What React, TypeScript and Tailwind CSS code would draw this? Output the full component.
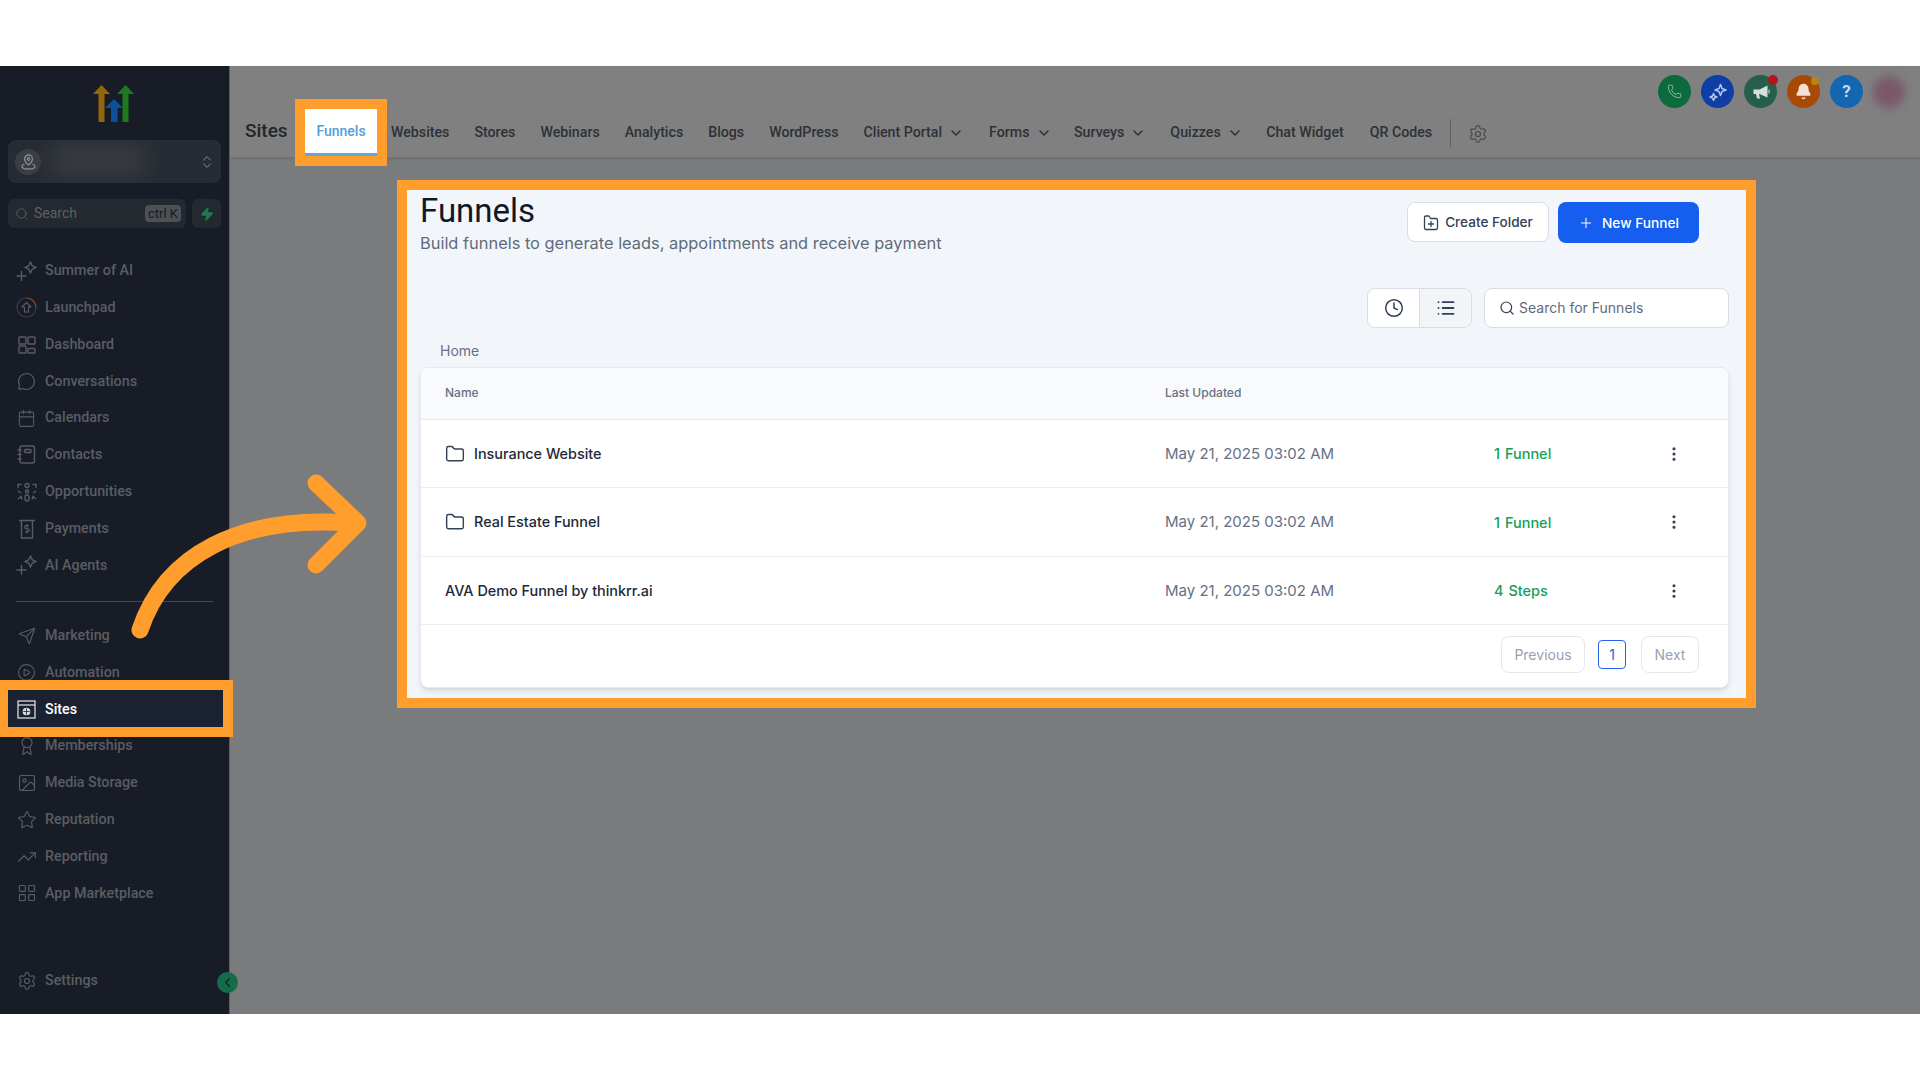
import {
  Bell,
  ChevronDown,
  ChevronLeft,
  ChevronsUpDown,
  CirclePlay,
  Clock,
  Folder,
  Image,
  LayoutGrid,
  List,
  MoreVertical,
  MessageCircle,
  Phone,
  Plus,
  Search,
  Send,
  Settings,
  Star,
  TrendingUp,
  Zap,
  Award,
  Calendar,
} from "lucide-react";
import type { ReactNode } from "react";

const Sparkle = () => (
  <svg width="21" height="20" viewBox="0 0 21 20" fill="none" stroke="currentColor" strokeWidth="1.4" strokeLinejoin="round" strokeLinecap="round">
    <path d="M14.5 1 16.2 4.8 20 6.5 16.2 8.2 14.5 12 12.8 8.2 9 6.5 12.8 4.8Z" />
    <path d="M5.5 10.5v9M1 15h9" />
  </svg>
);

const Launch = () => (
  <svg width="21" height="21" viewBox="0 0 21 21" fill="none" stroke="currentColor" strokeWidth="1.2">
    <circle cx="10.5" cy="10.5" r="9.5" opacity="0.5" />
    <path d="M10.5 1a9.5 9.5 0 0 1 9.5 9" stroke="#8a4d22" />
    <path d="M10.5 5.5 15 10h-2.5v5h-4v-5H6Z" strokeLinejoin="round" />
  </svg>
);

const Board = () => (
  <svg width="18" height="18" viewBox="0 0 18 18" fill="none" stroke="currentColor" strokeWidth="1.4">
    <rect x="1" y="1" width="7" height="7" rx="0.8" />
    <rect x="10" y="1" width="7" height="7" rx="0.8" />
    <rect x="1" y="10" width="7" height="7" rx="0.8" />
    <rect x="10" y="12.5" width="7" height="4.5" rx="0.8" />
  </svg>
);

const Contacts = () => (
  <svg width="19" height="19" viewBox="0 0 19 19" fill="none" stroke="currentColor" strokeWidth="1.4" strokeLinecap="round">
    <rect x="3" y="1" width="14.5" height="17" rx="2" />
    <rect x="7.5" y="4.5" width="6.5" height="3" rx="1" />
    <path d="M1 5h3M1 9.5h3M1 14h3" />
  </svg>
);

const Opps = () => (
  <svg width="20" height="20" viewBox="0 0 20 20" fill="none" stroke="currentColor" strokeWidth="1.4">
    <circle cx="10" cy="3.5" r="2" />
    <circle cx="10" cy="9.5" r="1.5" />
    <rect x="8" y="13" width="4" height="6" rx="2" />
    <path d="M1 6V2.5h3.5M19 6V2.5h-3.5M1 9l3 2M19 9l-3 2M1 17l3-2.5 1 3M19 17l-3-2.5-1 3" />
  </svg>
);

const Receipt = () => (
  <svg width="18" height="20" viewBox="0 0 18 20" fill="none" stroke="currentColor" strokeWidth="1.4">
    <path d="M1 1.5h16M3.5 1.5V19h11V1.5" />
    <path d="M11 6.5H8.2a1.4 1.4 0 0 0 0 3.2h1.6a1.4 1.4 0 0 1 0 3.2H7M9 5v9.5" strokeWidth="1.1" />
  </svg>
);

const SiteIcon = () => (
  <svg width="19" height="19" viewBox="0 0 19 19" fill="none" stroke="currentColor" strokeWidth="1.3">
    <rect x="1" y="1" width="17" height="17" />
    <path d="M1 5h17" />
    <circle cx="9.5" cy="11.5" r="3.2" fill="currentColor" />
    <path d="M6.3 11.5h6.4M9.5 8.3v6.4" stroke="#171c26" strokeWidth="0.8" />
  </svg>
);

const Logo = () => (
  <svg width="42" height="38" viewBox="0 0 42 38">
    <path d="M0 9 8.5 0 17 9h-5.5v28h-6V9Z" fill="#94660e" />
    <path d="M12 23 21 14l9 9h-5.5v14h-6.5V23Z" fill="#0e5097" />
    <path d="M24 9 32.5 0 41 9h-5.5v28h-6V9Z" fill="#1d7a1f" />
  </svg>
);

const LocationPin = () => (
  <svg width="15" height="16" viewBox="0 0 15 16" fill="none" stroke="currentColor" strokeWidth="1.3" strokeLinejoin="round">
    <path d="M7.5 1a4 4 0 0 1 4 4c0 2.6-2.5 4.6-4 6-1.5-1.4-4-3.4-4-6a4 4 0 0 1 4-4Z" />
    <circle cx="7.5" cy="5" r="1.3" />
    <path d="M3.5 10C1.8 10.6 1 11.4 1 12.4 1 13.9 3.9 15 7.5 15s6.500-1.100 6.500-2.600c0-1-.8-1.800-2.500-2.400" />
  </svg>
);

const FolderAdd = () => (
  <svg width="16" height="17" viewBox="0 0 16 17" fill="none" stroke="currentColor" strokeWidth="1.3" strokeLinecap="round" strokeLinejoin="round">
    <path d="M1.5 14V3.5A1.5 1.5 0 0 1 3 2h3l1.5 2.5H13A1.5 1.5 0 0 1 14.5 6v8a1.5 1.5 0 0 1-1.5 1.5H3A1.5 1.5 0 0 1 1.5 14Z" />
    <path d="M8 7.5v5M5.5 10h5" />
  </svg>
);

const TwoStars = () => (
  <svg width="18" height="18" viewBox="0 0 18 18" fill="none" stroke="currentColor" strokeWidth="1.5" strokeLinejoin="round">
    <path d="M11.5 1.5 13 5.5 17 7l-4 1.5-1.5 4-1.5-4L6 7l4-1.5Z" />
    <path d="M4.5 10.5 5.500 13 8 14l-2.500 1-1 2.500-1-2.500L1 14l2.500-1Z" />
  </svg>
);

const Horn = () => (
  <svg width="18" height="18" viewBox="0 0 18 18" fill="currentColor">
    <path d="M1.5 6.500h6L15.500 2.500v12l-8-3.500H7l1 4.500H5L4 11H1.500Z" />
    <path d="M16.500 6.500h1v4h-1Z" />
  </svg>
);

const topItems: [string, ReactNode][] = [
  ["Summer of AI", <Sparkle />],
  ["Launchpad", <Launch />],
  ["Dashboard", <Board />],
  ["Conversations", <MessageCircle size={19} strokeWidth={1.4} />],
  ["Calendars", <Calendar size={19} strokeWidth={1.4} />],
  ["Contacts", <Contacts />],
  ["Opportunities", <Opps />],
  ["Payments", <Receipt />],
  ["AI Agents", <Sparkle />],
];

const bottomItems: [string, ReactNode][] = [
  ["Memberships", <Award size={20} strokeWidth={1.4} />],
  ["Media Storage", <Image size={20} strokeWidth={1.4} />],
  ["Reputation", <Star size={20} strokeWidth={1.4} />],
  ["Reporting", <TrendingUp size={20} strokeWidth={1.4} />],
  ["App Marketplace", <LayoutGrid size={20} strokeWidth={1.4} />],
];

const navLinks: [string, boolean, string][] = [
  ["Websites", false, ""],
  ["Stores", false, ""],
  ["Webinars", false, ""],
  ["Analytics", false, ""],
  ["Blogs", false, ""],
  ["WordPress", false, ""],
  ["Client Portal", true, ""],
  ["Forms", true, ""],
  ["Surveys", true, "-ml-[2.5px]"],
  ["Quizzes", true, "-ml-[1px]"],
  ["Chat Widget", false, "-ml-[1.5px]"],
  ["QR Codes", false, "ml-[1px]"],
];

const rows = [
  { name: "Insurance Website", folder: true, count: "1 Funnel" },
  { name: "Real Estate Funnel", folder: true, count: "1 Funnel" },
  { name: "AVA Demo Funnel by thinkrr.ai", folder: false, count: "4 Steps" },
];

const NavRow = ({ label, icon }: { label: string; icon: ReactNode }) => (
  <div className="h-[36.8px] flex items-center pl-[16px] shrink-0">
    <span className="w-[21px] flex justify-center text-[#595c62]">{icon}</span>
    <span className="ml-[8px] text-[14.3px] font-medium text-[#5a5d63]">{label}</span>
  </div>
);

const Sidebar = () => (
  <aside className="w-[230px] shrink-0 bg-[#171c26] border-r border-[#5c5f64] flex flex-col relative">
    <div className="h-[74px] flex justify-center pt-[19px] shrink-0 pr-[1px]">
      <Logo />
    </div>
    <div className="mx-[8px] h-[43px] rounded-lg bg-[#272b33] flex items-center pl-[7px] pr-[6px] relative overflow-hidden shrink-0">
      <span className="w-[26px] h-[26px] rounded-full bg-[#3a3e45] flex items-center justify-center text-[#8b8e93]">
        <LocationPin />
      </span>
      <span className="absolute left-[40px] top-[5px] w-[100px] h-[30px] rounded-full bg-[#3a3e44] blur-md" />
      <ChevronsUpDown size={16} strokeWidth={1.5} className="ml-auto text-[#8b8e93]" />
    </div>
    <div className="mx-[8px] mt-[16px] flex gap-[6px] shrink-0">
      <div className="w-[178px] h-[29px] rounded-md bg-[#24282f] flex items-center pl-[7px] pr-[5px] text-[#5d6065]">
        <Search size={14} strokeWidth={1.6} />
        <span className="ml-[5px] text-[14px]">Search</span>
        <span className="ml-auto w-[36px] h-[17px] rounded-sm bg-[#4d5055] text-[#17191d] text-[13px] leading-[17px] text-center whitespace-nowrap">ctrl K</span>
      </div>
      <div className="w-[29px] h-[29px] rounded-md bg-[#24282f] flex items-center justify-center text-[#1f7a4d]">
        <Zap size={14} fill="currentColor" />
      </div>
    </div>
    <div className="mt-[24.6px] flex flex-col">
      {topItems.map(([label, icon]) => (
        <NavRow key={label} label={label} icon={icon} />
      ))}
    </div>
    <div className="mx-[16px] mt-[17.6px] h-px bg-[#44474d] shrink-0" />
    <div className="mt-[15px] flex flex-col">
      <NavRow label="Marketing" icon={<Send size={18} strokeWidth={1.4} />} />
      <NavRow label="Automation" icon={<CirclePlay size={19} strokeWidth={1.4} />} />
      <div className="h-[36.8px] flex items-center pl-[16px] shrink-0 relative">
        <span className="absolute left-0 w-[233px] top-[-11px] h-[57px] border-[10px] border-l-[8px] border-[#ff9e2c] bg-[#1a2231] z-10" />
        <span className="relative z-20 w-[21px] flex justify-center text-[#d9dadc]">
          <SiteIcon />
        </span>
        <span className="relative z-20 ml-[8px] text-[14.3px] font-medium text-white">Sites</span>
      </div>
      {bottomItems.map(([label, icon]) => (
        <NavRow key={label} label={label} icon={icon} />
      ))}
    </div>
    <div className="mt-auto mb-[14.6px]">
      <NavRow label="Settings" icon={<Settings size={20} strokeWidth={1.4} />} />
    </div>
    <span className="absolute left-[217px] top-[906px] w-[21px] h-[21px] rounded-full bg-[#166b4b] flex items-center justify-center text-[#10261f] z-10">
      <ChevronLeft size={15} strokeWidth={2} />
    </span>
  </aside>
);

const Header = () => (
  <header className="h-[92px] shrink-0 bg-[#808080] border-b border-[#747576] shadow-sm relative">
    <div className="absolute right-[15px] top-[9px] flex items-center gap-[10px]">
      <span className="w-[33px] h-[33px] rounded-full bg-[#0b6b3c] flex items-center justify-center text-[#8fbfa6]">
        <Phone size={15} strokeWidth={1.5} />
      </span>
      <span className="w-[33px] h-[33px] rounded-full bg-[#0f3ea6] flex items-center justify-center text-[#b4c6ec]">
        <TwoStars />
      </span>
      <span className="w-[33px] h-[33px] rounded-full bg-[#265f49] flex items-center justify-center text-[#d5e0da] relative">
        <Horn />
        <span className="absolute right-[-1px] top-[0px] w-[10px] h-[10px] rounded-full bg-[#b3161d]" />
      </span>
      <span className="w-[33px] h-[33px] rounded-full bg-[#a84a06] flex items-center justify-center text-[#f3e2d5] relative">
        <Bell size={17} fill="currentColor" />
        <span className="absolute right-[1px] top-[2px] w-[8px] h-[8px] rounded-full bg-[#b8860b]" />
      </span>
      <span className="w-[33px] h-[33px] rounded-full bg-[#1566b0] flex items-center justify-center text-[#c9dcef] text-[17px] font-bold">
        ?
      </span>
      <span className="w-[32px] h-[32px] rounded-full bg-[#79586a] blur-[5px]" />
    </div>
    <div className="h-full flex items-center pl-[15px] pt-[41px]">
      <span className="text-[19px] font-medium text-[#22262d] w-[45px] -mt-[2px]">Sites</span>
      <div className="relative ml-[15px] w-[72px] h-[47px] bg-white border-b-[3px] border-[#5aa9e0] flex items-center justify-center shrink-0">
        <span className="absolute left-[-10px] top-[-10px] w-[92px] h-[67px] border-[10px] border-[#ff9e2c]" />
        <span className="text-[14px] font-medium text-[#4f9fdc] mt-[2px]">Funnels</span>
      </div>
      <nav className="ml-[14px] flex items-center gap-[25px] text-[14.2px] font-medium text-[#2c3138] mt-[2px]">
        {navLinks.map(([label, drop, nudge]) => (
          <span key={label} className={`flex items-center gap-[6px] whitespace-nowrap ${nudge}`}>
            {label}
            {drop && <ChevronDown size={16} strokeWidth={2.2} />}
          </span>
        ))}
      </nav>
      <span className="ml-[18px] w-px h-[28px] bg-[#5e6064] mt-[2px]" />
      <Settings size={20} strokeWidth={1.4} className="ml-[17px] text-[#45484d] mt-[3px]" />
    </div>
  </header>
);

const Panel = () => (
  <section className="ml-[167px] mt-[22px] w-[1359px] h-[528px] border-[10px] border-[#ff9e2c] bg-[#f2f6fa] font-['Inter',sans-serif] flex flex-col">
    <div className="flex items-start pl-[13px] pr-[47px] pt-[3px]">
      <div>
        <h1 className="text-[33px] leading-[36px] font-normal text-[#101828] font-['Roboto',sans-serif]">Funnels</h1>
        <p className="mt-[3.6px] text-[16.4px] leading-[20px] text-[#5f6b7a]">Build funnels to generate leads, appointments and receive payment</p>
      </div>
      <div className="ml-auto flex gap-[9px] mt-[9px]">
        <button className="w-[142px] h-[40px] pt-[1px] bg-white border border-[#d8dde3] rounded-lg flex items-center justify-center gap-[6px] text-[13.6px] font-medium text-[#344054]">
          <FolderAdd />
          Create Folder
        </button>
        <button className="w-[141px] h-[41px] pt-[1px] bg-[#155eef] rounded-lg flex items-center justify-center gap-[8px] text-[13.7px] font-medium text-white">
          <Plus size={16} strokeWidth={1.6} />
          New Funnel
        </button>
      </div>
    </div>
    <div className="flex justify-end pr-[17px] mt-[35.4px] gap-[12px]">
      <div className="w-[105px] h-[40px] flex border border-[#d8dde3] rounded-lg overflow-hidden">
        <span className="w-[52px] bg-white flex items-center justify-center border-r border-[#d8dde3] text-[#344054]">
          <Clock size={20} strokeWidth={1.8} />
        </span>
        <span className="flex-1 bg-[#f2f5f8] flex items-center justify-center text-[#344054]">
          <List size={20} strokeWidth={2.2} />
        </span>
      </div>
      <div className="w-[245px] h-[40px] bg-white border border-[#d8dde3] rounded-lg flex items-center pl-[14px] gap-[4px] text-[14px] text-[#5f6b7a]">
        <Search size={16} strokeWidth={1.8} className="text-[#344054]" />
        Search for Funnels
      </div>
    </div>
    <div className="pl-[33px] mt-[13px] h-[20px] text-[14px] leading-[20px] text-[#667085]">Home</div>
    <div className="ml-[13px] mr-[17px] mt-[6px] h-[321px] rounded-lg bg-white border border-[#e6e9ee] shadow-md overflow-hidden flex flex-col">
      <div className="h-[52px] shrink-0 bg-[#f9fafb] border-b border-[#e4e7ec] flex items-center pl-[24px] text-[12px] font-medium text-[#667085]">
        <span className="w-[720px]">Name</span>
        <span>Last Updated</span>
      </div>
      {rows.map((row) => (
        <div key={row.name} className="h-[68.5px] shrink-0 border-b border-[#e9ecf0] flex items-center pl-[24px]">
          <span className="w-[720px] flex items-center gap-[9px] text-[14.4px] font-medium text-[#1d2939]">
            {row.folder && <Folder size={20} strokeWidth={1.7} className="text-[#344054]" />}
            {row.name}
          </span>
          <span className="w-[329px] text-[15px] text-[#667085] mt-[1px]">May 21, 2025 03:02 AM</span>
          <span className="w-[171px] text-[14.5px] font-medium text-[#15a058] [word-spacing:1px] mt-[1px]">{row.count}</span>
          <MoreVertical size={18} strokeWidth={2.2} className="text-[#344054]" />
        </div>
      ))}
      <div className="flex-1 flex items-center justify-end pr-[29px] pb-[3px] text-[14px]">
        <span className="w-[84px] h-[37px] rounded-lg border border-[#e4e7ec] text-[#98a2b3] flex items-center justify-center">Previous</span>
        <span className="ml-[13px] w-[28px] h-[29px] rounded-sm border border-[#2563eb] text-[#2563eb] flex items-center justify-center">1</span>
        <span className="ml-[15px] w-[58px] h-[37px] rounded-lg border border-[#e4e7ec] text-[#98a2b3] flex items-center justify-center">Next</span>
      </div>
    </div>
  </section>
);

const App = () => (
  <div className="w-[1920px] h-[1080px] bg-white overflow-hidden relative font-['Roboto',sans-serif]">
    <div className="h-[66px]" />
    <div className="h-[948px] flex">
      <Sidebar />
      <main className="flex-1 bg-[#7a7b7d] flex flex-col">
        <Header />
        <Panel />
      </main>
    </div>
    <svg className="absolute left-0 top-0 pointer-events-none z-30" width="400" height="700" fill="none" stroke="#ff9e2c" strokeWidth="17" strokeLinecap="round" strokeLinejoin="round">
      <path d="M140 630C165 555 240 515 350 523" />
      <path d="M316 483 358 523 316 565" />
    </svg>
  </div>
);

export default App;
